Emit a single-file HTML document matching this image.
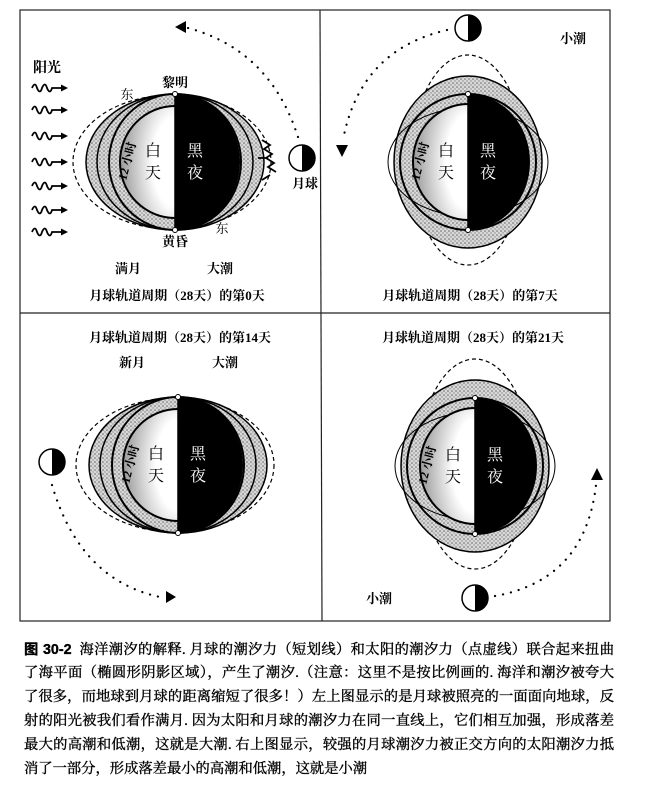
<!DOCTYPE html>
<html><head><meta charset="utf-8"><style>
html,body{margin:0;padding:0;background:#fff;width:646px;height:788px;overflow:hidden}
.cap{position:absolute;left:24px;width:590px;font-family:"Liberation Serif","Noto Serif CJK SC",serif;font-size:14.3px;color:#000;-webkit-text-stroke:0.35px #000;white-space:nowrap;text-align:justify;text-align-last:justify;line-height:20px}
</style></head><body>
<svg width="646" height="630" style="position:absolute;left:0;top:0" font-family="Liberation Serif,Noto Serif CJK SC,serif" font-weight="bold">
<defs>
<pattern id="st" width="4" height="4" patternUnits="userSpaceOnUse">
<rect width="4" height="4" fill="#d8d8d8"/><circle cx="1" cy="1" r="0.8" fill="#666"/><circle cx="3" cy="3" r="0.7" fill="#888"/>
</pattern>
<radialGradient id="dg" cx="1" cy="0.5" r="1"><stop offset="0.4" stop-color="#fff"/><stop offset="1" stop-color="#999"/></radialGradient>
<g id="eh">
<ellipse cx="-3" cy="0" rx="99" ry="67" fill="none" stroke="#000" stroke-width="1.2" stroke-dasharray="4 3"/>
<ellipse cx="0" cy="0" rx="89" ry="68" fill="url(#st)" stroke="#000" stroke-width="1.5"/>
<ellipse cx="0" cy="0" rx="78" ry="68" fill="none" stroke="#000" stroke-width="1.5"/>
<ellipse cx="0" cy="0" rx="66" ry="68" fill="none" stroke="#000" stroke-width="2"/>
<path d="M0,-56 A55,56 0 0 0 0,56 Z" fill="url(#dg)"/>
<path d="M0,-56 A55,56 0 0 0 0,56" fill="none" stroke="#000" stroke-width="2"/>
<path d="M0,-68 A65,68 0 0 1 0,68 Z" fill="#000"/>
<line x1="0" y1="-68" x2="0" y2="68" stroke="#000" stroke-width="1.5"/>
<circle cx="0" cy="-68" r="2.5" fill="#fff" stroke="#000"/><circle cx="0" cy="68" r="2.5" fill="#fff" stroke="#000"/>
<text x="-22" y="-6" font-size="16" text-anchor="middle" font-weight="normal">白</text>
<text x="-22" y="16" font-size="16" text-anchor="middle" font-weight="normal">天</text>
<text x="20" y="-6" font-size="16" text-anchor="middle" fill="#fff" font-weight="normal">黑</text>
<text x="20" y="16" font-size="16" text-anchor="middle" fill="#fff" font-weight="normal">夜</text>
<text transform="translate(-44,0) rotate(-75)" font-size="12" text-anchor="middle">12 小时</text>
</g>
<g id="ev">
<ellipse cx="0" cy="-2" rx="56" ry="105" fill="none" stroke="#000" stroke-width="1.2" stroke-dasharray="4 3"/>
<ellipse cx="0" cy="0" rx="74" ry="86" fill="url(#st)" stroke="#000" stroke-width="1.5"/>
<ellipse cx="0" cy="0" rx="80" ry="54" fill="none" stroke="#000" stroke-width="1"/>
<ellipse cx="0" cy="0" rx="68" ry="68" fill="none" stroke="#000" stroke-width="2"/>
<path d="M0,-58 A55,58 0 0 0 0,58 Z" fill="url(#dg)"/>
<path d="M0,-58 A55,58 0 0 0 0,58" fill="none" stroke="#000" stroke-width="2"/>
<path d="M0,-68 A62,68 0 0 1 0,68 Z" fill="#000"/>
<line x1="0" y1="-68" x2="0" y2="68" stroke="#000" stroke-width="1.5"/>
<circle cx="0" cy="-68" r="2.5" fill="#fff" stroke="#000"/><circle cx="0" cy="68" r="2.5" fill="#fff" stroke="#000"/>
<text x="-22" y="-6" font-size="16" text-anchor="middle" font-weight="normal">白</text>
<text x="-22" y="16" font-size="16" text-anchor="middle" font-weight="normal">天</text>
<text x="20" y="-6" font-size="16" text-anchor="middle" fill="#fff" font-weight="normal">黑</text>
<text x="20" y="16" font-size="16" text-anchor="middle" fill="#fff" font-weight="normal">夜</text>
<text transform="translate(-44,0) rotate(-75)" font-size="12" text-anchor="middle">12 小时</text>
</g>
<g id="moon"><circle r="13" fill="#fff" stroke="#000" stroke-width="1.5"/><path d="M0,-13 A13,13 0 0 1 0,13 Z" fill="#000"/></g>
</defs>
<rect x="20" y="10" width="590" height="611" fill="none" stroke="#222" stroke-width="1.2"/>
<line x1="320" y1="10" x2="322" y2="621" stroke="#222" stroke-width="1.2"/>
<line x1="20" y1="313" x2="610" y2="313" stroke="#222" stroke-width="1.2"/>

<use href="#eh" x="175" y="162"/>
<path d="M298,137 Q270,50 188,28" fill="none" stroke="#000" stroke-width="2.2" stroke-dasharray="0.1 8" stroke-linecap="round"/>
<path d="M175,27 L186,21 L186,33 Z" fill="#000"/>
<use href="#moon" x="302" y="158"/>
<text x="47" y="72" font-size="14" text-anchor="middle">阳光</text>
<g fill="none" stroke="#000" stroke-width="1.8">
<path d="M32,88 q3,-7 5,0 q3,7 5,0 q3,-7 5,0 q3,7 5,0 h12"/>
<path d="M32,110 q3,-7 5,0 q3,7 5,0 q3,-7 5,0 q3,7 5,0 h12"/>
<path d="M32,136 q3,-7 5,0 q3,7 5,0 q3,-7 5,0 q3,7 5,0 h12"/>
<path d="M32,162 q3,-7 5,0 q3,7 5,0 q3,-7 5,0 q3,7 5,0 h12"/>
<path d="M32,186 q3,-7 5,0 q3,7 5,0 q3,-7 5,0 q3,7 5,0 h12"/>
<path d="M32,210 q3,-7 5,0 q3,7 5,0 q3,-7 5,0 q3,7 5,0 h12"/>
<path d="M32,232 q3,-7 5,0 q3,7 5,0 q3,-7 5,0 q3,7 5,0 h12"/>
<path d="M262,140 l8,5 -6,4 8,5 -6,4 8,5 -6,4 8,5 M258,158 h10 M262,180 l8,-5"/>
</g>
<g fill="#000"><path d="M68,88 l-7,-3.5 v7z M68,110 l-7,-3.5 v7z M68,136 l-7,-3.5 v7z M68,162 l-7,-3.5 v7z M68,186 l-7,-3.5 v7z M68,210 l-7,-3.5 v7z M68,232 l-7,-3.5 v7z"/></g>
<text x="175" y="87" font-size="13" text-anchor="middle">黎明</text>
<text x="127" y="99" font-size="13" text-anchor="middle" font-weight="normal">东</text>
<text x="305" y="188" font-size="13" text-anchor="middle">月球</text>
<text x="175" y="246" font-size="13" text-anchor="middle">黄昏</text>
<text x="222" y="233" font-size="13" text-anchor="middle" font-weight="normal">东</text>
<text x="128" y="273" font-size="13" text-anchor="middle">满月</text>
<text x="220" y="273" font-size="13" text-anchor="middle">大潮</text>
<text x="177" y="300" font-size="13" text-anchor="middle">月球轨道周期（28天）的第0天</text>

<use href="#ev" x="468" y="162"/>
<use href="#moon" x="468" y="28"/>
<path d="M447,30 Q360,50 343,140" fill="none" stroke="#000" stroke-width="2.2" stroke-dasharray="0.1 8" stroke-linecap="round"/>
<path d="M336,145 L348,145 L342,157 Z" fill="#000"/>
<text x="573" y="43" font-size="13" text-anchor="middle">小潮</text>
<text x="470" y="300" font-size="13" text-anchor="middle">月球轨道周期（28天）的第7天</text>

<text x="180" y="342" font-size="13" text-anchor="middle">月球轨道周期（28天）的第14天</text>
<text x="132" y="367" font-size="13" text-anchor="middle">新月</text>
<text x="225" y="367" font-size="13" text-anchor="middle">大潮</text>
<use href="#eh" x="178" y="465"/>
<use href="#moon" x="52" y="462"/>
<path d="M52,485 Q80,580 160,597" fill="none" stroke="#000" stroke-width="2.2" stroke-dasharray="0.1 8" stroke-linecap="round"/>
<path d="M176,597 L166,591 L166,603 Z" fill="#000"/>

<text x="473" y="342" font-size="13" text-anchor="middle">月球轨道周期（28天）的第21天</text>
<use href="#ev" x="475" y="466"/>
<use href="#moon" x="475" y="598"/>
<text x="379" y="603" font-size="13" text-anchor="middle">小潮</text>
<path d="M495,596 Q585,580 596,485" fill="none" stroke="#000" stroke-width="2.2" stroke-dasharray="0.1 8" stroke-linecap="round"/>
<path d="M597,468 L591,480 L603,480 Z" fill="#000"/>
</svg>

<div class="cap" style="top:640px"><b style="font-family:'Liberation Sans','Noto Sans CJK SC',sans-serif">图 30-2</b>&nbsp;&nbsp;海洋潮汐的解释. 月球的潮汐力（短划线）和太阳的潮汐力（点虚线）联合起来扭曲</div>
<div class="cap" style="top:663px">了海平面（椭圆形阴影区域），产生了潮汐.（注意：这里不是按比例画的. 海洋和潮汐被夸大</div>
<div class="cap" style="top:687px">了很多，而地球到月球的距离缩短了很多！）左上图显示的是月球被照亮的一面面向地球，反</div>
<div class="cap" style="top:711px">射的阳光被我们看作满月. 因为太阳和月球的潮汐力在同一直线上，它们相互加强，形成落差</div>
<div class="cap" style="top:735px">最大的高潮和低潮，这就是大潮. 右上图显示，较强的月球潮汐力被正交方向的太阳潮汐力抵</div>
<div class="cap" style="top:759px;text-align-last:left">消了一部分，形成落差最小的高潮和低潮，这就是小潮</div>
</body></html>
